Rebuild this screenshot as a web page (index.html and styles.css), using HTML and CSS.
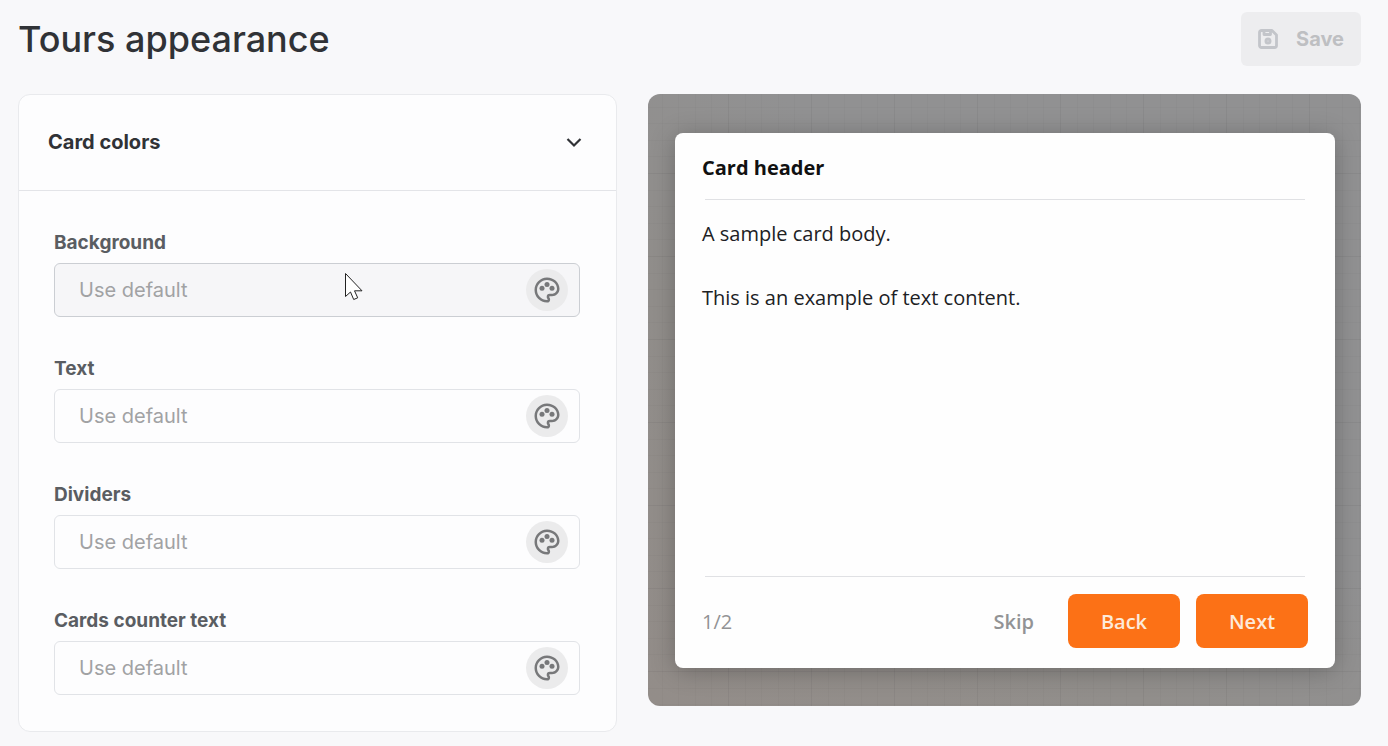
FILE: index.html
```
<!DOCTYPE html>
<html lang="en">
<head>
<meta charset="utf-8">
<title>Tours appearance</title>
<link rel="stylesheet" href="styles.css">
</head>
<body>
<svg class="defs" aria-hidden="true">
  <symbol id="palette" viewBox="0 0 24 24">
    <path d="M12 2C6.500 2 2 6.500 2 12s4.500 10 10 10a2.500 2.500 0 0 0 2.500-2.500c0-.610-.230-1.200-.640-1.670a.530.530 0 0 1-.130-.330c0-.280.220-.500.500-.500H16c3.310 0 6-2.690 6-6 0-4.960-4.490-9-10-9zm4 13h-1.770a2.500 2.500 0 0 0-2.500 2.500c0 .600.220 1.190.630 1.650.060.070.140.190.140.350 0 .280-.220.500-.500.500-4.410 0-8-3.590-8-8s3.590-8 8-8 8 3.140 8 7c0 2.210-1.790 4-4 4z"/>
    <circle cx="8" cy="10.500" r="2"/><circle cx="12" cy="7.500" r="2"/><circle cx="16" cy="10.500" r="2"/>
  </symbol>
</svg>
<header class="topbar">
  <h1 class="title">Tours appearance</h1>
  <button class="save" type="button" disabled>
    <svg class="save-icon" viewBox="0 0 20 20" aria-hidden="true">
      <path d="M3.500 1.500h10.500l4.500 4.500v10.500a2 2 0 0 1-2 2h-13a2 2 0 0 1-2-2v-13a2 2 0 0 1 2-2z"/>
      <path d="M6 2v3.500h6.500V2"/>
      <circle cx="10" cy="12" r="2"/>
    </svg>
    Save
  </button>
</header>
<main class="columns">
  <section class="panel">
    <button class="panel-head" type="button" aria-expanded="true">
      Card colors
      <svg class="chevron" viewBox="0 0 16 16" aria-hidden="true"><path d="M1.500 5l6.500 6.500L14.500 5"/></svg>
    </button>
    <div class="fields">
      <div class="field hovered">
        <label for="bg">Background</label>
        <div class="box"><input id="bg" type="text" placeholder="Use default"><button class="pick" type="button" aria-label="Pick background color"><svg viewBox="0 0 24 24"><use href="#palette"/></svg></button>
          <svg class="cursor" viewBox="0 0 18 28" aria-hidden="true"><path d="M.500.500v23l5-4.500 3.200 7.500 4-1.700-3.200-7H17z"/></svg>
        </div>
      </div>
      <div class="field">
        <label for="text">Text</label>
        <div class="box"><input id="text" type="text" placeholder="Use default"><button class="pick" type="button" aria-label="Pick text color"><svg viewBox="0 0 24 24"><use href="#palette"/></svg></button></div>
      </div>
      <div class="field">
        <label for="dividers">Dividers</label>
        <div class="box"><input id="dividers" type="text" placeholder="Use default"><button class="pick" type="button" aria-label="Pick dividers color"><svg viewBox="0 0 24 24"><use href="#palette"/></svg></button></div>
      </div>
      <div class="field">
        <label for="counter">Cards counter text</label>
        <div class="box"><input id="counter" type="text" placeholder="Use default"><button class="pick" type="button" aria-label="Pick counter color"><svg viewBox="0 0 24 24"><use href="#palette"/></svg></button></div>
      </div>
    </div>
  </section>
  <section class="preview">
    <article class="card">
      <h2 class="card-head">Card header</h2>
      <div class="card-body">
        <p>A sample card body.</p>
        <p>This is an example of text content.</p>
      </div>
      <footer class="card-foot">
        <span class="count">1/2</span>
        <button class="skip" type="button">Skip</button>
        <button class="go" type="button">Back</button>
        <button class="go" type="button">Next</button>
      </footer>
    </article>
  </section>
</main>
</body>
</html>
```
FILE: styles.css
```
* { box-sizing: border-box; }
body {
  margin: 0;
  padding: 12px 27px 14px 18px;
  background: #f8f8fa;
  color: #303236;
  font-family: Inter, "Liberation Sans", sans-serif;
}
button, input { font: inherit; color: inherit; }
.defs { position: absolute; width: 0; height: 0; }
.topbar { display: flex; justify-content: space-between; align-items: center; margin-bottom: 28px; }
.title { margin: 0; font-size: 36px; line-height: 54px; font-weight: 500; }
.save {
  display: flex; align-items: center; gap: 18px;
  height: 54px; padding: 0 17px;
  border: 0; border-radius: 6px;
  background: #ededef; color: #bebfc2;
  font-size: 20px; font-weight: 700;
}
.save-icon { width: 20px; height: 20px; fill: none; stroke: #c3c5ca; stroke-width: 2.8; stroke-linejoin: round; }
.save-icon circle { stroke-width: 3; }
.columns { display: grid; grid-template-columns: minmax(0, 599fr) minmax(0, 713fr); align-items: start; gap: 31px; }
.panel { background: #fdfdfe; border: 1px solid #e9eaed; border-radius: 12px; }
.panel-head {
  display: flex; justify-content: space-between; align-items: center;
  width: 100%; padding: 31px 34px 32px 29px;
  border: 0; border-bottom: 1px solid #e3e4e8; background: none;
  font-size: 20px; line-height: 32px; font-weight: 700; text-align: left;
}
.chevron { width: 16px; height: 16px; fill: none; stroke: #303236; stroke-width: 2.2; }
.fields { display: flex; flex-direction: column; gap: 40px; padding: 40px 36px 36px 35px; }
.field { display: flex; flex-direction: column; gap: 8px; }
.field label { font-size: 19px; line-height: 24px; font-weight: 700; color: #5a5d62; }
.box {
  position: relative; display: flex; align-items: center;
  height: 54px; padding: 0 11px 0 24px;
  border: 1px solid #e1e3e7; border-radius: 6px; background: #fdfdfe;
}
.hovered .box { background: #f6f6f8; border-color: #cbced3; }
.box input { flex: 1; min-width: 0; padding: 0; border: 0; outline: 0; background: none; font-size: 20px; line-height: 32px; }
.box input::placeholder { color: #a1a2a4; opacity: 1; }
.pick { display: flex; align-items: center; justify-content: center; width: 42px; height: 42px; padding: 0; border: 0; border-radius: 50%; background: #ebebec; }
.pick svg { width: 30px; height: 30px; fill: #77787a; }
.cursor { position: absolute; left: 290px; top: 9px; width: 18px; height: 28px; fill: #fff; stroke: #222; stroke-width: 1; }
.preview {
  padding: 39px 26px 38px 27px; border-radius: 12px;
  background-color: #929191;
  background-image:
    linear-gradient(90deg, #0000000c 1px, transparent 1px 17px, #00000005 17px 18px, transparent 18px 33px, #00000005 33px 34px, transparent 34px 50px, #00000005 50px 51px, transparent 51px 66px, #00000005 66px 67px, transparent 67px),
    linear-gradient(#0000000c 1px, transparent 1px 17px, #00000005 17px 18px, transparent 18px 33px, #00000005 33px 34px, transparent 34px 50px, #00000005 50px 51px, transparent 51px 66px, #00000005 66px 67px, transparent 67px),
    linear-gradient(40deg, #938d89, #918e8b 35%, #919192 60%);
  background-size: 83px 83px, 83px 83px, auto;
  background-position: -3px -4px, -3px -4px, 0 0;
}
.card {
  display: flex; flex-direction: column; min-height: 535px;
  padding: 19px 27px 20px; border-radius: 8px;
  background: #fefefe; color: #202124;
  box-shadow: 0 3px 24px #00000040;
  font-family: "Open Sans", "Noto Sans", sans-serif; font-size: 20px; line-height: 32px;
}
.card-head { margin: 0; padding-bottom: 16px; font-size: 20px; line-height: 32px; font-weight: 700; color: #111; }
.card-head, .card-foot { background: linear-gradient(#e0e1e4, #e0e1e4) no-repeat; background-size: calc(100% - 6px) 1px; }
.card-head { background-position: center bottom; }
.card-body { flex: 1; padding: 18px 0; }
.card-body p { margin: 0 0 32px; }
.card-foot { display: flex; align-items: center; gap: 16px; padding-top: 18px; background-position: center top; color: #929395; }
.count { flex: 1; padding-top: 2px; }
.skip, .go { height: 54px; padding: 2px 18px 0; border: 0; font-weight: 600; }
.skip { background: none; }
.go { min-width: 112px; border-radius: 8px; background: #fc7116; color: #fdeada; }
```
